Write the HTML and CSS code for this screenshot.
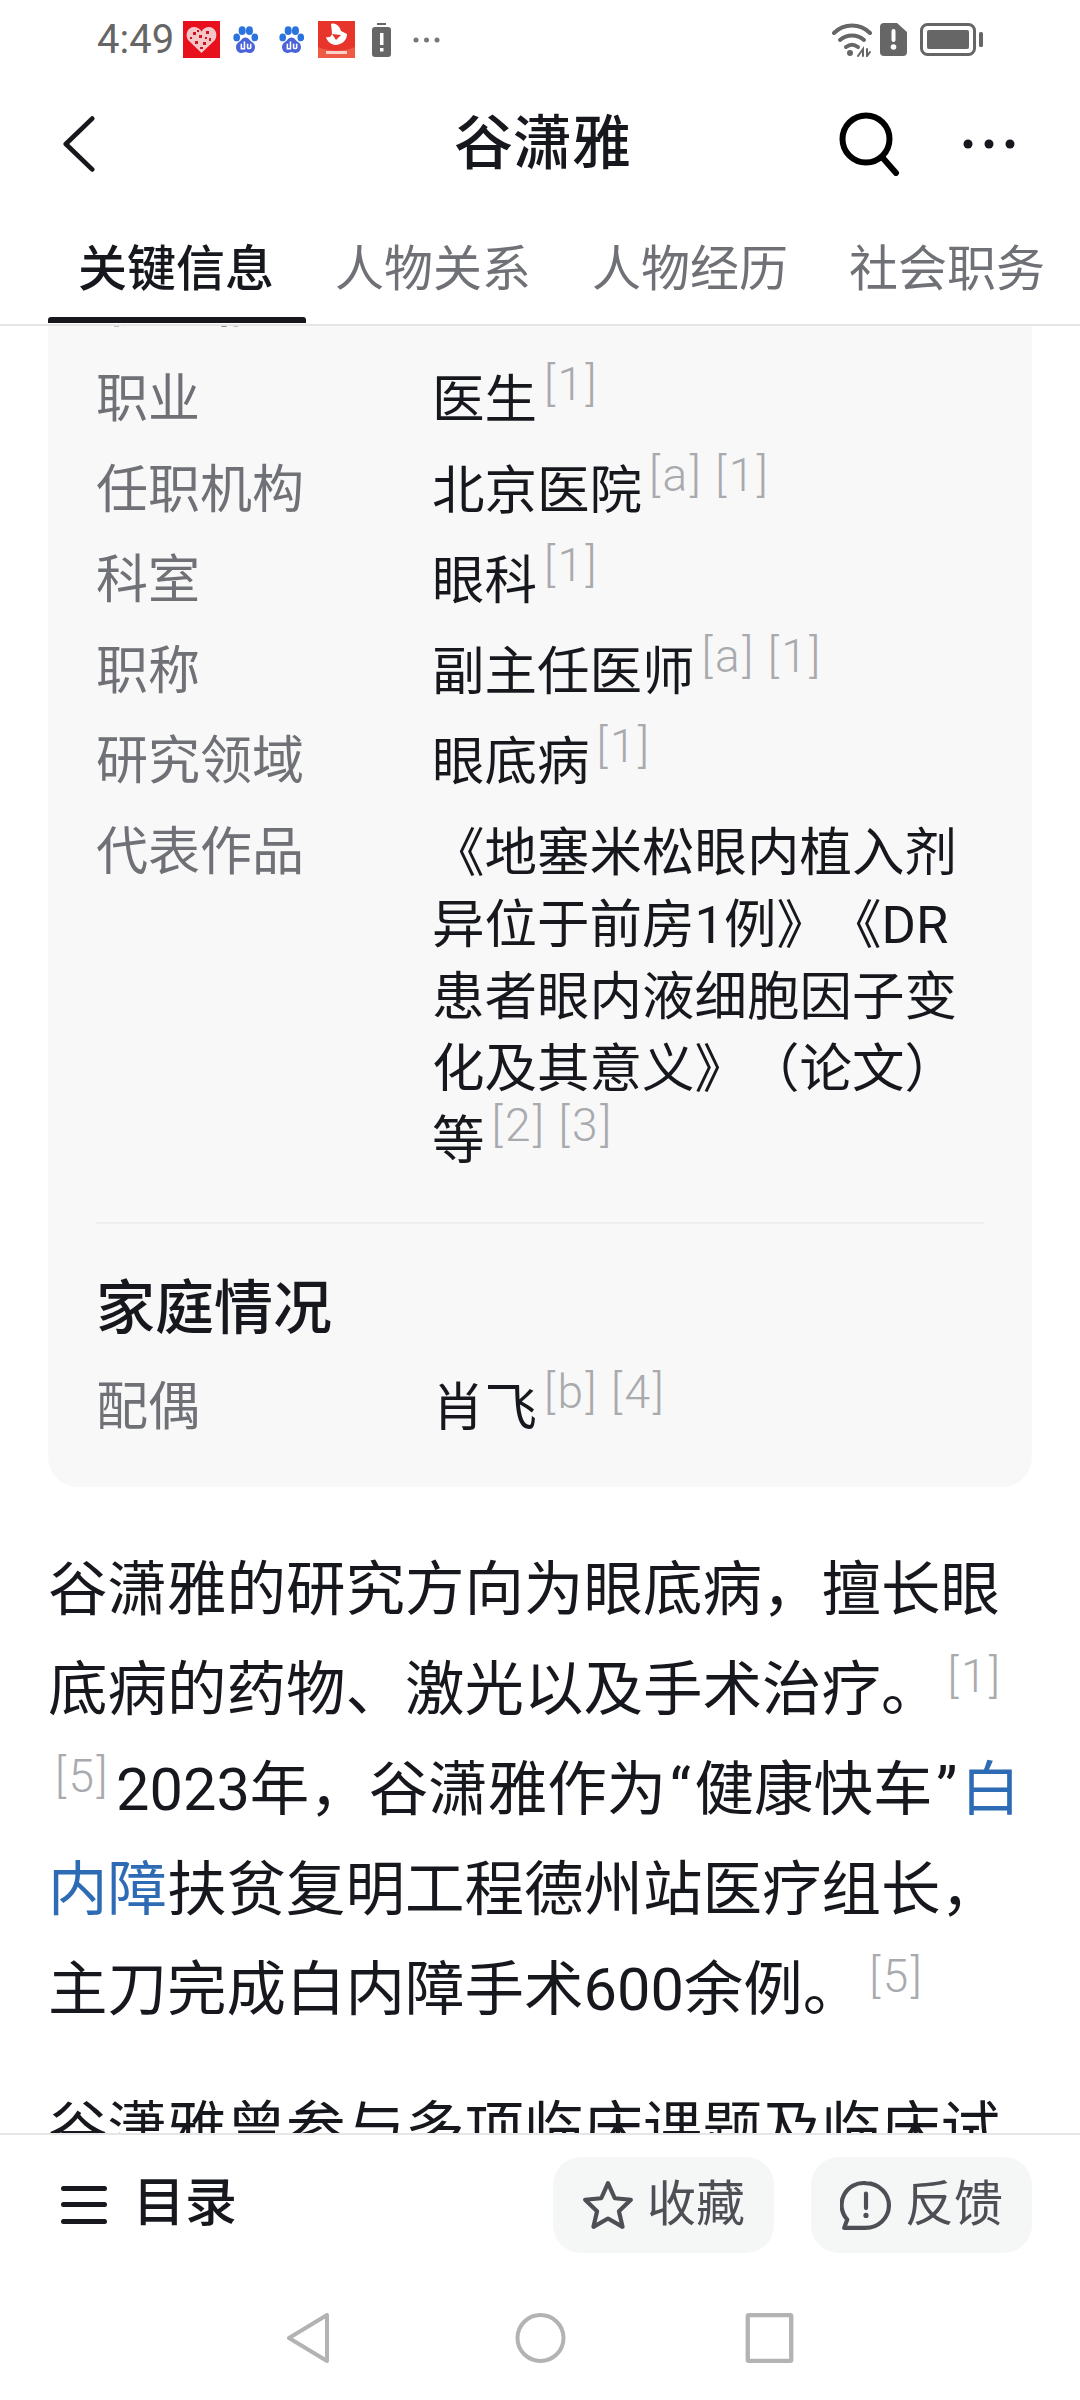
FILE: index.html
```html
<!DOCTYPE html>
<html lang="zh-CN">
<head>
<meta charset="utf-8">
<title>谷潇雅</title>
<link rel="stylesheet" href="styles.css">
</head>
<body>
<div class="page">
  <div class="status">
    <span class="time">4:49</span>
    <svg class="ic-app" viewBox="0 0 37 37"><rect width="37" height="37" fill="#e8101c"/><path d="M18.5 32 5 19C1.500 13 5 6 11 6c3 0 6 1.500 7.500 4.500C20 7.500 23 6 26 6c6 0 9.500 7 6 13Z" fill="#f5c6c8"/><path d="M10 11h3v3h-3zM16 14h3v3h-3zM23 10h3v3h-3zM12 20h3v3h-3zM20 21h3v3h-3zM26 17h2v3h-2zM17 26h3v2h-3zM7 16h2v2H7zM14 9h2v2h-2zM22 16h2v2h-2z" fill="#d21420"/></svg>
    <svg class="ic-paw" viewBox="0 0 24 27"><use href="#paw"/></svg>
    <svg class="ic-paw second" viewBox="0 0 24 27"><use href="#paw"/></svg>
    <svg class="ic-app red2" viewBox="0 0 37 37"><rect width="37" height="37" fill="#e8352c"/><path d="M0 26c12 5 25 5 37 0v11H0Z" fill="#ee5a44"/><path d="M13 3c5-2 9 3 10 7l6 3c0 7-6 11-12 11-5-1-8-4-9-8 4 1 6-1 6-4Z" fill="#fff"/><path d="M14 13l9 1-5 5Z" fill="#e8352c"/><path d="M8 30h21v3H8Z" fill="#fbd0c8"/></svg>
    <svg class="ic-batt" viewBox="0 0 19 34"><rect x="5" y="0" width="9" height="2" fill="#666"/><rect y="4" width="19" height="30" rx="3" fill="#666"/><rect x="8" y="10" width="3.500" height="12" fill="#fff"/><rect x="8" y="25" width="3.500" height="3.500" fill="#fff"/></svg>
    <svg class="ic-more" viewBox="0 0 27 6"><circle cx="3" cy="3" r="2.500" fill="#777"/><circle cx="13.500" cy="3" r="2.500" fill="#777"/><circle cx="24" cy="3" r="2.500" fill="#777"/></svg>
    <span class="status-fill"></span>
    <svg class="ic-wifi" viewBox="0 0 40 34" fill="none" stroke="#666" stroke-width="4" stroke-linecap="round"><path d="M2 10C12 0 28 0 38 10"/><path d="M8 17c7-6 17-6 24 0"/><path d="M14 24c4-3 8-3 12 0"/><circle cx="18" cy="30" r="3" fill="#666" stroke="none"/><path d="M26 33l5-7v7M35 26v7l3-4" stroke-width="2"/></svg>
    <svg class="ic-sim" viewBox="0 0 27 33"><path d="M4 0h13l10 9v20a4 4 0 0 1-4 4H4a4 4 0 0 1-4-4V4a4 4 0 0 1 4-4Z" fill="#666"/><rect x="11.500" y="6" width="4" height="13" rx="2" fill="#fff"/><circle cx="13.500" cy="24" r="2.800" fill="#fff"/></svg>
    <svg class="ic-bat" viewBox="0 0 63 33"><rect x="1.500" y="1.500" width="53" height="30" rx="6" fill="none" stroke="#666" stroke-width="3"/><rect x="7" y="7" width="42" height="19" rx="2" fill="#666"/><rect x="59" y="9" width="4" height="15" rx="1.500" fill="#666"/></svg>
  </div>

  <div class="header">
    <svg class="ic-back" viewBox="0 0 34 60" fill="none" stroke="#16181d" stroke-width="5" stroke-linecap="round" stroke-linejoin="round"><path d="M31 3 3 30l28 27"/></svg>
    <h1 class="title">谷潇雅</h1>
    <svg class="ic-search" viewBox="0 0 62 64" fill="none" stroke="#000" stroke-width="6" stroke-linecap="round"><circle cx="27" cy="27" r="23.500"/><path d="M43 45 57 61"/></svg>
    <svg class="ic-dots" viewBox="0 0 52 10"><circle cx="5" cy="5" r="4.500" fill="#16181d"/><circle cx="26" cy="5" r="4.500" fill="#16181d"/><circle cx="47" cy="5" r="4.500" fill="#16181d"/></svg>
  </div>

  <div class="tabs">
    <div class="tab active">关键信息</div>
    <div class="tab">人物关系</div>
    <div class="tab">人物经历</div>
    <div class="tab">社会职务</div>
  </div>

  <div class="scroll">
    <div class="card">
      <div class="card-head">职业信息</div>
      <div class="row"><div class="key">职业</div><div class="val">医生<sup>[1]</sup></div></div>
      <div class="row"><div class="key">任职机构</div><div class="val">北京医院<sup>[a]</sup><sup>[1]</sup></div></div>
      <div class="row"><div class="key">科室</div><div class="val">眼科<sup>[1]</sup></div></div>
      <div class="row"><div class="key">职称</div><div class="val">副主任医师<sup>[a]</sup><sup>[1]</sup></div></div>
      <div class="row"><div class="key">研究领域</div><div class="val">眼底病<sup>[1]</sup></div></div>
      <div class="row"><div class="key">代表作品</div><div class="val">《地塞米松眼内植入剂异位于前房1例》《DR患者眼内液细胞因子变化及其意义》（论文）等<sup>[2]</sup><sup>[3]</sup></div></div>
      <div class="divider"></div>
      <div class="section">家庭情况</div>
      <div class="row"><div class="key">配偶</div><div class="val">肖飞<sup>[b]</sup><sup>[4]</sup></div></div>
    </div>
    <p class="para">谷潇雅的研究方向为眼底病，擅长眼底病的药物、激光以及手术治疗。<sup>[1]</sup><sup>[5]</sup>2023年，谷潇雅作为<span class="quote">“</span>健康快车<span class="quote">”</span><span class="link">白内障</span>扶贫复明工程德州站医疗组长，主刀完成白内障手术600余例。<sup>[5]</sup></p>
    <p class="para">谷潇雅曾参与多项临床课题及临床试验</p>
  </div>

  <div class="bar">
    <svg class="ic-menu" viewBox="0 0 46 38" fill="#16181d"><rect width="46" height="5" y="0" rx="2.500"/><rect width="46" height="5" y="16" rx="2.500"/><rect width="46" height="5" y="33" rx="2.500"/></svg>
    <span class="toc">目录</span>
    <span class="status-fill"></span>
    <div class="btn">
      <svg class="ic-btn" viewBox="0 0 50 48" fill="none" stroke="#4d4f55" stroke-width="4" stroke-linejoin="round"><path d="M25 3l6.500 14.500L47 19 35.500 30 39 45l-14-8-14 8 3.500-15L3 19l15.500-1.500Z"/></svg>
      <span class="btn-label">收藏</span>
    </div>
    <div class="btn">
      <svg class="ic-btn" viewBox="0 0 50 48" fill="none" stroke="#4d4f55" stroke-width="4" stroke-linecap="round"><path d="M25 3a22 21 0 1 1-1 43H4l3-8A21 21 0 0 1 25 3Z" stroke-linejoin="round"/><path d="M25 13v14"/><circle cx="25" cy="34" r="2.500" fill="#4d4f55" stroke="none"/></svg>
      <span class="btn-label">反馈</span>
    </div>
  </div>

  <div class="nav">
    <svg class="ic-nav first" viewBox="0 0 43 50" fill="none" stroke="#b3b3b3" stroke-width="4" stroke-linejoin="round"><path d="M41 2v46L3 25Z"/></svg>
    <svg class="ic-nav" viewBox="0 0 50 50" fill="none" stroke="#b3b3b3" stroke-width="4"><circle cx="25" cy="25" r="23"/></svg>
    <svg class="ic-nav" viewBox="0 0 44 46" fill="none" stroke="#b3b3b3" stroke-width="4"><rect x="2" y="2" width="40" height="42" rx="1"/></svg>
  </div>
</div>

<svg class="defs" width="0" height="0">
  <defs>
    <g id="paw">
      <ellipse cx="3.500" cy="11" rx="3.200" ry="3.800" fill="#2b74e0"/>
      <ellipse cx="8.800" cy="4.500" rx="3.400" ry="4.200" fill="#2b74e0"/>
      <ellipse cx="15.800" cy="4.500" rx="3.400" ry="4.200" fill="#2b74e0"/>
      <ellipse cx="21" cy="11" rx="3.200" ry="3.800" fill="#2b74e0"/>
      <path d="M12 11c3 0 4 3 7 5 4 3 2 10-3 10-2 0-3-1-4-1s-2 1-4 1c-5 0-7-7-3-10 3-2 4-5 7-5Z" fill="#4a63d8"/>
      <path d="M8 17v5h3v-7M14 17v4c0 1 3 1 3 0v-4" fill="none" stroke="#fff" stroke-width="1.500"/>
    </g>
  </defs>
</svg>
</body>
</html>
```

FILE: styles.css
```css
* { box-sizing: border-box; }
html, body { margin: 0; padding: 0; background: #fff; }
body { font-family: Roboto, "Noto Sans CJK SC", sans-serif; color: #16181d; text-spacing-trim: space-all; font-feature-settings: "palt" 0, "halt" 0, "chws" 0; }
.defs { position: absolute; }
.page { width: 1080px; height: 2400px; display: flex; flex-direction: column; overflow: hidden; }

.status { height: 66px; flex: none; padding: 13px 97px 0 97px; display: flex; align-items: center; }
.status-fill { flex: 1; }
.time { font-size: 40px; color: #666; width: 86px; }
.ic-app { width: 37px; height: 37px; flex: none; }
.ic-paw { width: 25px; height: 28px; flex: none; margin-left: 13px; }
.ic-paw.second { margin-left: 21px; }
.red2 { margin-left: 14px; }
.ic-batt { width: 19px; height: 34px; margin-left: 17px; flex: none; }
.ic-more { width: 27px; height: 6px; margin-left: 22px; flex: none; }
.ic-wifi { width: 40px; height: 34px; flex: none; }
.ic-sim { width: 27px; height: 33px; margin-left: 8px; flex: none; }
.ic-bat { width: 63px; height: 33px; margin-left: 13px; flex: none; }

.header { height: 156px; flex: none; display: flex; align-items: center; padding: 0 65px 0 63px; }
.ic-back { width: 32px; height: 58px; flex: none; margin-top: -1px; }
.title { flex: 1; margin: 0; font-size: 59px; font-weight: 500; text-align: center; padding-left: 151px; line-height: 80px; }
.ic-search { width: 62px; height: 64px; flex: none; margin-right: 62px; }
.ic-dots { width: 52px; height: 10px; flex: none; }

.tabs { height: 104px; flex: none; display: flex; padding-left: 48px; border-bottom: 2px solid #e6e6e6; position: relative; z-index: 2; }
.tab { font-size: 49px; width: 257px; padding-left: 30px; color: #6f7176; line-height: 96px; white-space: nowrap; position: relative; }
.tab.active { color: #16181d; font-weight: 500; }
.tab.active::after { content: ""; position: absolute; left: 0; top: 95px; width: 258px; height: 6px; border-radius: 3px 3px 0 0; background: #16181d; }

.scroll { flex: 1; min-height: 0; overflow: hidden; padding: 0 48px; }
.card { background: #f8f8f8; border-radius: 0 0 30px 30px; padding: 0 48px; margin-top: -60px; height: 1221px; }
.card-head { font-size: 58px; line-height: 70px; font-weight: 500; margin-bottom: 18px; }
.row { display: flex; min-height: 90.500px; }
.key { width: 336px; flex: none; font-size: 52px; line-height: 72px; padding-top: 10px; color: #6f7176; }
.val { flex: 1; font-size: 52.500px; line-height: 72px; padding-top: 10px; }
sup { font-size: 46px; font-weight: 300; color: #a9aaad; line-height: 0; letter-spacing: 2.500px; margin-left: 7px; vertical-align: 18px; }
sup + sup { margin-left: 12px; }
.divider { height: 2px; background: #eeeeee; margin-top: 45px; }
.section { font-size: 59px; font-weight: 500; line-height: 80px; margin-top: 45px; margin-bottom: 13px; }

.para { margin: 0 0 40px; font-size: 59.500px; line-height: 100px; }
.para:first-of-type { margin-top: 53px; }
.para sup + sup { margin-left: 7px; margin-right: 6px; }
.link { color: #2e6bb5; }
.quote { margin: 0 3.500px; }

.bar { height: 156px; flex: none; border-top: 2px solid #e6e6e6; background: #fff; display: flex; align-items: flex-start; padding: 22px 48px 0 61px; position: relative; }
.ic-menu { width: 46px; height: 38px; flex: none; margin-top: 29px; }
.toc { font-size: 52px; font-weight: 500; margin-left: 26px; line-height: 94px; }
.btn { width: 221px; height: 96px; border-radius: 28px; background: #f5f6f6; display: flex; align-items: center; justify-content: center; font-size: 49px; color: #4d4f55; gap: 13px; margin-left: 37px; }
.btn-label { line-height: 90px; }
.ic-btn { width: 52px; height: 50px; flex: none; }

.nav { height: 111px; flex: none; display: flex; justify-content: center; align-items: flex-start; padding-top: 24px; }
.ic-nav { height: 50px; width: 229px; flex: none; }
.ic-nav.first { margin-left: -4px; margin-right: 4px; }
```
